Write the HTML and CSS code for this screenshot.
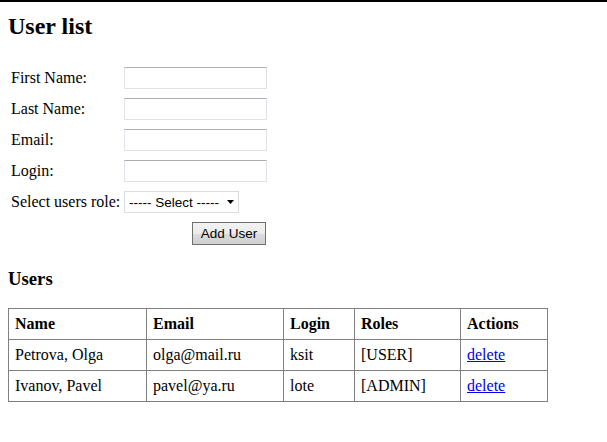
FILE: index.html
```html
<!DOCTYPE html>
<html>
<head>
<meta charset="utf-8">
<title>User list</title>
<link rel="stylesheet" href="styles.css">
</head>
<body>
<div class="topbar"></div>
<main class="page">
  <h2 class="title">User list</h2>
  <form class="user-form">
    <label class="label" for="fn">First Name:</label>
    <input class="field" id="fn" type="text">
    <label class="label" for="ln">Last Name:</label>
    <input class="field" id="ln" type="text">
    <label class="label" for="em">Email:</label>
    <input class="field" id="em" type="text">
    <label class="label" for="lg">Login:</label>
    <input class="field" id="lg" type="text">
    <label class="label" for="rl">Select users role:</label>
    <div class="select-wrap">
      <select class="select" id="rl">
        <option>----- Select -----</option>
        <option>USER</option>
        <option>ADMIN</option>
      </select>
      <svg class="select-arrow" width="7" height="4" viewBox="0 0 7 4"><path d="M0 0H7L3.5 4Z" fill="#000"/></svg>
    </div>
    <span></span>
    <div class="actions"><button class="btn" type="button">Add User</button></div>
  </form>
  <h3 class="subtitle">Users</h3>
  <table class="users">
    <colgroup>
      <col class="c1"><col class="c2"><col class="c3"><col class="c4"><col class="c5">
    </colgroup>
    <thead>
      <tr><th>Name</th><th>Email</th><th>Login</th><th>Roles</th><th>Actions</th></tr>
    </thead>
    <tbody>
      <tr><td>Petrova, Olga</td><td>olga@mail.ru</td><td>ksit</td><td>[USER]</td><td><a href="#" class="link">delete</a></td></tr>
      <tr><td>Ivanov, Pavel</td><td>pavel@ya.ru</td><td>lote</td><td>[ADMIN]</td><td><a href="#" class="link">delete</a></td></tr>
    </tbody>
  </table>
</main>
</body>
</html>
```
FILE: styles.css
```css
html, body {
  margin: 0;
  padding: 0;
  background: #fff;
}
body {
  font-family: "Liberation Serif", "Times New Roman", serif;
  font-size: 16px;
  color: #000;
}
.topbar {
  height: 2px;
  background: #000;
}
.page {
  padding: 0 8px;
}
.title {
  margin: 10px 0 0 0;
  font-size: 24px;
  line-height: 28px;
  font-weight: bold;
}
.user-form {
  margin-top: 27px;
  display: grid;
  grid-template-columns: 116px 143px;
  row-gap: 9px;
  align-items: center;
}
.label {
  padding-left: 3px;
  line-height: 18px;
  white-space: nowrap;
}
.field {
  box-sizing: border-box;
  width: 143px;
  height: 22px;
  margin: 0;
  border: 1px solid #dfe3e8;
  border-top-color: #abadb3;
  border-left-color: #e2e3ea;
  padding: 1px 3px;
  font: 13px "Liberation Sans", Arial, sans-serif;
  background: #fff;
}
.select-wrap {
  position: relative;
  width: 115px;
  height: 22px;
}
.select {
  appearance: none;
  -webkit-appearance: none;
  box-sizing: border-box;
  width: 115px;
  height: 22px;
  margin: 0;
  border: 1px solid #dcdcdc;
  border-radius: 0;
  background: #fff;
  padding: 0 0 0 4px;
  font: 13.5px "Liberation Sans", Arial, sans-serif;
  color: #000;
}
.select-arrow {
  position: absolute;
  right: 5px;
  top: 9px;
  pointer-events: none;
}
.actions {
  display: flex;
  justify-content: flex-end;
  padding-right: 1px;
}
.btn {
  box-sizing: border-box;
  width: 74px;
  height: 23px;
  margin: 0;
  border: 1px solid #707070;
  border-radius: 0;
  background: linear-gradient(#f2f2f2 0%, #ebebeb 50%, #dddddd 51%, #cfcfcf 100%);
  font: 13.5px "Liberation Sans", Arial, sans-serif;
  color: #000;
  padding: 0;
}
.subtitle {
  margin: 23px 0 0 0;
  font-size: 18.72px;
  line-height: 22px;
  font-weight: bold;
}
.users {
  margin-top: 18px;
  border-collapse: collapse;
  table-layout: fixed;
  width: 539px;
  border: 1px solid #808080;
}
.c1 { width: 138px; }
.c2 { width: 137px; }
.c3 { width: 71px; }
.c4 { width: 106px; }
.c5 { width: 87px; }
.users th, .users td {
  border: 1px solid #808080;
  height: 31px;
  padding: 0 6px;
  text-align: left;
  vertical-align: middle;
  box-sizing: border-box;
  white-space: nowrap;
}
.users th {
  font-weight: bold;
}
.link {
  color: #0000ee;
  text-decoration: underline;
}
```
